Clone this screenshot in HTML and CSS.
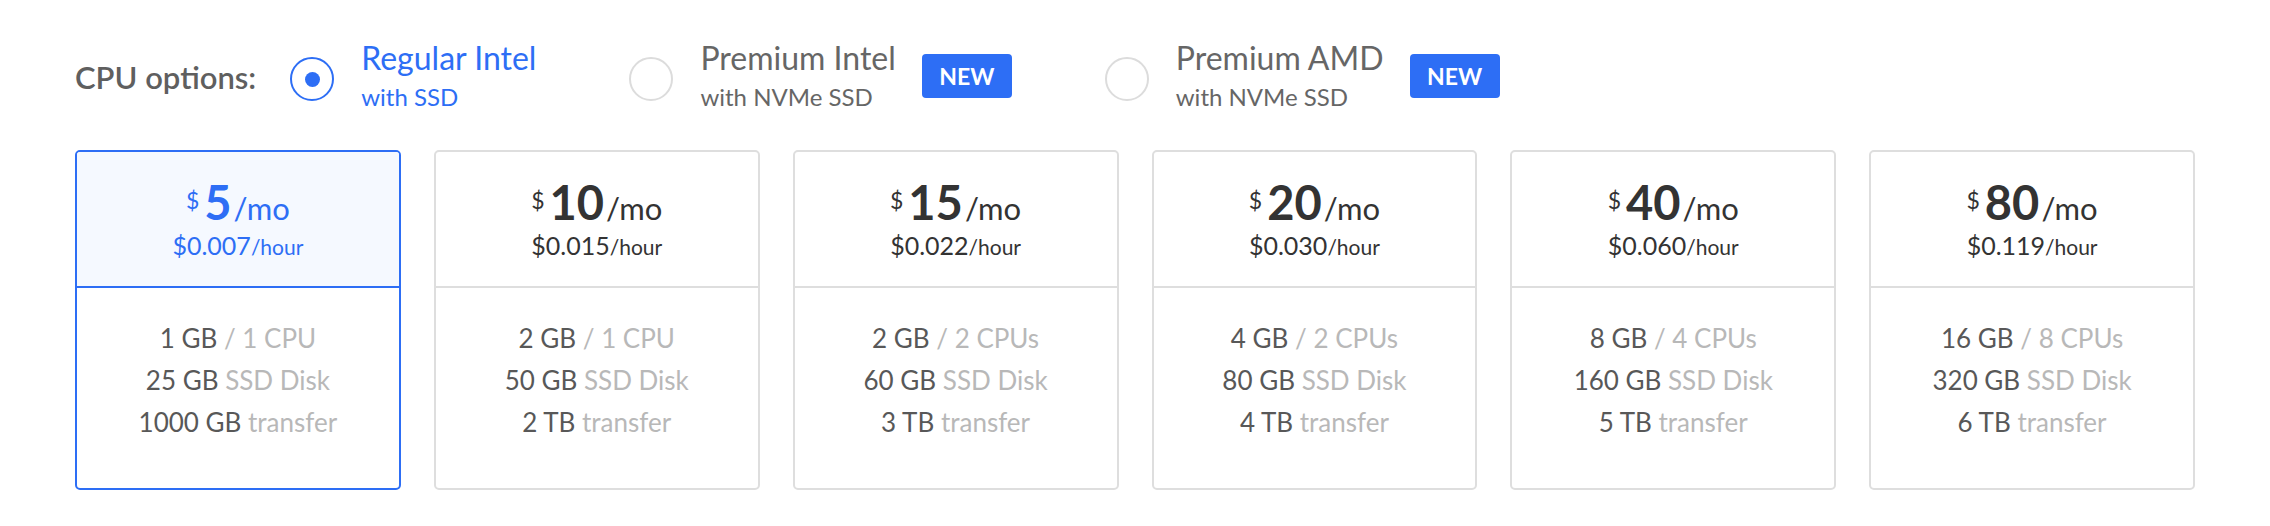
FILE: index.html
```html
<!DOCTYPE html>
<html>
<head>
<meta charset="utf-8">
<link rel="stylesheet" href="styles.css">
</head>
<body>
<div class="page">
  <div class="options">
    <div class="options-label">CPU options:</div>
    <div class="option selected">
      <span class="radio"><span class="radio-dot"></span></span>
      <span class="option-text"><span class="option-title">Regular Intel</span><span class="option-sub">with SSD</span></span>
    </div>
    <div class="option">
      <span class="radio"></span>
      <span class="option-text"><span class="option-title">Premium Intel</span><span class="option-sub">with NVMe SSD</span></span>
      <span class="badge">NEW</span>
    </div>
    <div class="option">
      <span class="radio"></span>
      <span class="option-text"><span class="option-title">Premium AMD</span><span class="option-sub">with NVMe SSD</span></span>
      <span class="badge">NEW</span>
    </div>
  </div>

  <div class="plans">
    <div class="plan selected">
      <div class="plan-price">
        <div class="price-mo"><span class="cur">$</span><span class="amt">5</span><span class="per">/mo</span></div>
        <div class="price-hr"><span class="hamt">$0.007</span><span class="hper">/hour</span></div>
      </div>
      <div class="plan-specs">
        <div><span class="val">1 GB</span> <span class="unit">/ 1 CPU</span></div>
        <div><span class="val">25 GB</span> <span class="unit">SSD Disk</span></div>
        <div><span class="val">1000 GB</span> <span class="unit">transfer</span></div>
      </div>
    </div>
    <div class="plan">
      <div class="plan-price">
        <div class="price-mo"><span class="cur">$</span><span class="amt">10</span><span class="per">/mo</span></div>
        <div class="price-hr"><span class="hamt">$0.015</span><span class="hper">/hour</span></div>
      </div>
      <div class="plan-specs">
        <div><span class="val">2 GB</span> <span class="unit">/ 1 CPU</span></div>
        <div><span class="val">50 GB</span> <span class="unit">SSD Disk</span></div>
        <div><span class="val">2 TB</span> <span class="unit">transfer</span></div>
      </div>
    </div>
    <div class="plan">
      <div class="plan-price">
        <div class="price-mo"><span class="cur">$</span><span class="amt">15</span><span class="per">/mo</span></div>
        <div class="price-hr"><span class="hamt">$0.022</span><span class="hper">/hour</span></div>
      </div>
      <div class="plan-specs">
        <div><span class="val">2 GB</span> <span class="unit">/ 2 CPUs</span></div>
        <div><span class="val">60 GB</span> <span class="unit">SSD Disk</span></div>
        <div><span class="val">3 TB</span> <span class="unit">transfer</span></div>
      </div>
    </div>
    <div class="plan">
      <div class="plan-price">
        <div class="price-mo"><span class="cur">$</span><span class="amt">20</span><span class="per">/mo</span></div>
        <div class="price-hr"><span class="hamt">$0.030</span><span class="hper">/hour</span></div>
      </div>
      <div class="plan-specs">
        <div><span class="val">4 GB</span> <span class="unit">/ 2 CPUs</span></div>
        <div><span class="val">80 GB</span> <span class="unit">SSD Disk</span></div>
        <div><span class="val">4 TB</span> <span class="unit">transfer</span></div>
      </div>
    </div>
    <div class="plan">
      <div class="plan-price">
        <div class="price-mo"><span class="cur">$</span><span class="amt">40</span><span class="per">/mo</span></div>
        <div class="price-hr"><span class="hamt">$0.060</span><span class="hper">/hour</span></div>
      </div>
      <div class="plan-specs">
        <div><span class="val">8 GB</span> <span class="unit">/ 4 CPUs</span></div>
        <div><span class="val">160 GB</span> <span class="unit">SSD Disk</span></div>
        <div><span class="val">5 TB</span> <span class="unit">transfer</span></div>
      </div>
    </div>
    <div class="plan">
      <div class="plan-price">
        <div class="price-mo"><span class="cur">$</span><span class="amt">80</span><span class="per">/mo</span></div>
        <div class="price-hr"><span class="hamt">$0.119</span><span class="hper">/hour</span></div>
      </div>
      <div class="plan-specs">
        <div><span class="val">16 GB</span> <span class="unit">/ 8 CPUs</span></div>
        <div><span class="val">320 GB</span> <span class="unit">SSD Disk</span></div>
        <div><span class="val">6 TB</span> <span class="unit">transfer</span></div>
      </div>
    </div>
  </div>
</div>
</body>
</html>
```

FILE: styles.css
```css
* { box-sizing: border-box; }
html, body { margin: 0; padding: 0; background: #fff; }
body {
  font-family: "Lato", "Open Sans", sans-serif;
  color: #555;
}
.page { padding: 0 75px; }

.options {
  display: flex;
  align-items: center;
  height: 150px;
  padding-top: 8px;
}
.options-label {
  font-size: 31px;
  font-weight: 600;
  color: #5f5f5f;
  margin-right: 34px;
  margin-bottom: 5px;
}
.option {
  display: flex;
  align-items: center;
  margin-right: 93px;
}
.radio {
  width: 44px;
  height: 44px;
  border: 2px solid #dcdcdc;
  border-radius: 50%;
  display: flex;
  align-items: center;
  justify-content: center;
  margin-right: 27px;
  flex: none;
}
.option.selected .radio { border-color: #2d6ef5; }
.radio-dot {
  width: 15px;
  height: 15px;
  border-radius: 50%;
  background: #2d6ef5;
}
.option-text { display: flex; flex-direction: column; }
.option-title { font-size: 32px; line-height: 36px; color: #666; }
.option-sub { font-size: 24px; line-height: 42px; color: #666; }
.option.selected .option-title,
.option.selected .option-sub { color: #2d6ef5; }
.badge {
  margin-left: 26px;
  width: 90px;
  height: 44px;
  border-radius: 4px;
  background: #2d6ef5;
  color: #fff;
  font-weight: 700;
  font-size: 23px;
  display: flex;
  align-items: center;
  justify-content: center;
  margin-top: -6px;
}

.plans {
  display: grid;
  grid-template-columns: repeat(6, 1fr);
  column-gap: 33px;
}
.plan {
  border: 2px solid #dedede;
  border-radius: 5px;
  height: 340px;
  display: flex;
  flex-direction: column;
  text-align: center;
}
.plan.selected { border-color: #2d6ef5; }
.plan-price {
  height: 136px;
  border-bottom: 2px solid #dedede;
  padding-top: 22px;
  color: #333;
}
.plan.selected .plan-price {
  background: #f5f9ff;
  border-bottom-color: #2d6ef5;
  color: #2d6ef5;
  border-radius: 3px 3px 0 0;
}
.price-mo { line-height: 56px; height: 56px; }
.cur { font-size: 23px; line-height: 1; vertical-align: 11px; margin-right: 5px; }
.amt { font-size: 47px; font-weight: 700; }
.per { font-size: 31px; margin-left: 2px; }
.price-hr { line-height: 30px; }
.hamt { font-size: 25px; }
.hper { font-size: 21px; }

.plan-specs {
  flex: 1;
  padding-top: 29px;
  font-size: 26px;
  line-height: 42px;
}
.val { color: #585858; }
.unit { color: #b8b8b8; }
```
